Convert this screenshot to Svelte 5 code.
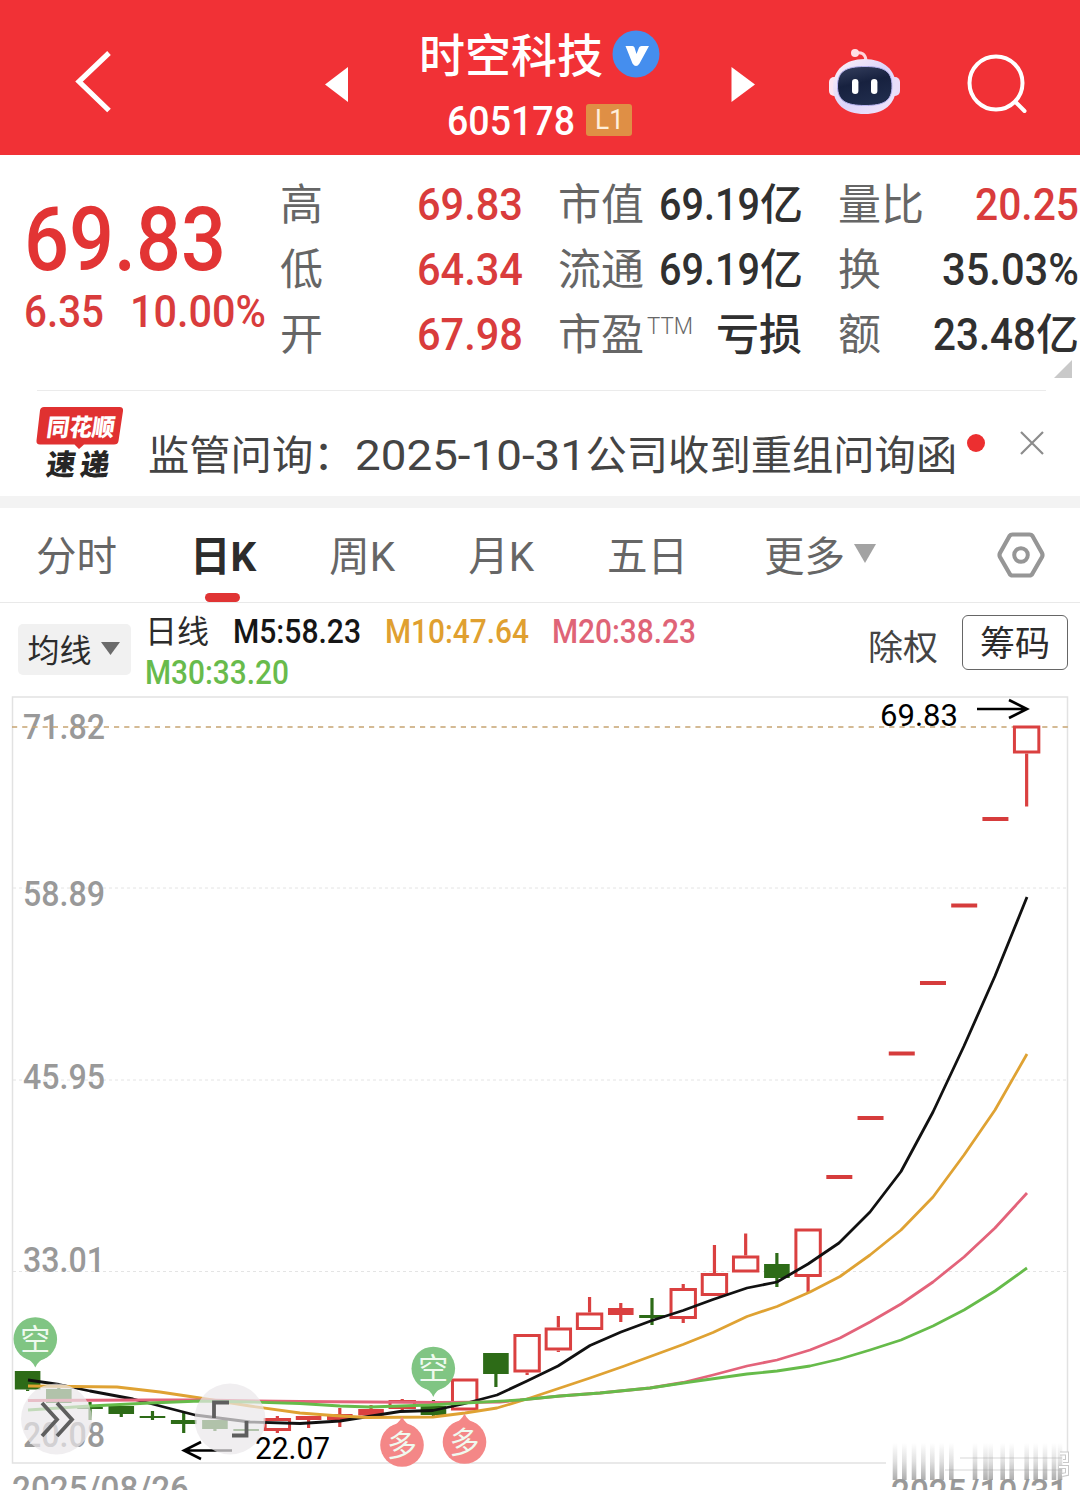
<script lang="ts">
    type Kind = "up" | "down" | "flat";

    interface Candle {
        kind: Kind;
        top: number;
        bottom: number;
        high?: number;
        low?: number;
        filled?: boolean;
    }

    const quotes = [
        [
            { label: "高", num: "69.83", w: 106, red: true },
            { label: "市值", num: "69.19", w: 101, unit: "亿" },
            { label: "量比", num: "20.25", w: 104, red: true },
        ],
        [
            { label: "低", num: "64.34", w: 106, red: true },
            { label: "流通", num: "69.19", w: 101, unit: "亿" },
            { label: "换", num: "35.03%", w: 137 },
        ],
        [
            { label: "开", num: "67.98", w: 106, red: true },
            { label: "市盈", sup: "TTM", unit: "亏损" },
            { label: "额", num: "23.48", w: 103, unit: "亿" },
        ],
    ];

    const tabs = ["分时", "日K", "周K", "月K", "五日"];
    let activeTab = $state("日K");

    const levels = [
        { text: "71.82", y: 739 },
        { text: "58.89", y: 906 },
        { text: "45.95", y: 1089 },
        { text: "33.01", y: 1272 },
        { text: "20.08", y: 1447 },
    ];

    // Candle geometry is in page pixels; the x position follows from the index.
    const FIRST_X = 27.6;
    const STEP = 31.22;
    const candles: Candle[] = [
        { kind: "down", top: 1371, bottom: 1389.5, low: 1391 },
        { kind: "down", top: 1389, bottom: 1403, high: 1388 },
        { kind: "down", top: 1407, bottom: 1409, high: 1402, low: 1420 },
        { kind: "down", top: 1406, bottom: 1414, low: 1417 },
        { kind: "down", top: 1416, bottom: 1418, high: 1411, low: 1420 },
        { kind: "down", top: 1420, bottom: 1424, high: 1413, low: 1433 },
        { kind: "down", top: 1420, bottom: 1429, low: 1431 },
        { kind: "down", top: 1429, bottom: 1431 },
        { kind: "up", top: 1418, bottom: 1431, high: 1416, low: 1433 },
        { kind: "up", top: 1416, bottom: 1420, low: 1428, filled: true },
        { kind: "up", top: 1414, bottom: 1420, high: 1408, low: 1427, filled: true },
        { kind: "up", top: 1409, bottom: 1415.5, high: 1405, filled: true },
        { kind: "up", top: 1400, bottom: 1409, high: 1399, low: 1411 },
        { kind: "down", top: 1406, bottom: 1415, high: 1400, low: 1416 },
        { kind: "up", top: 1378.5, bottom: 1410.5 },
        { kind: "down", top: 1353, bottom: 1374, low: 1387 },
        { kind: "up", top: 1334, bottom: 1372.5, low: 1375 },
        { kind: "up", top: 1327.5, bottom: 1350.5, high: 1316, low: 1352 },
        { kind: "up", top: 1312.5, bottom: 1330, high: 1297 },
        { kind: "up", top: 1308, bottom: 1315, high: 1303, low: 1322, filled: true },
        { kind: "down", top: 1315, bottom: 1318, high: 1298, low: 1325 },
        { kind: "up", top: 1288, bottom: 1319, high: 1284, low: 1323 },
        { kind: "up", top: 1273, bottom: 1296, high: 1245 },
        { kind: "up", top: 1255.5, bottom: 1272.5, high: 1233.5 },
        { kind: "down", top: 1264, bottom: 1278, high: 1253, low: 1287 },
        { kind: "up", top: 1228.5, bottom: 1277, low: 1292 },
        { kind: "flat", top: 1177, bottom: 1177 },
        { kind: "flat", top: 1118, bottom: 1118 },
        { kind: "flat", top: 1053.5, bottom: 1053.5 },
        { kind: "flat", top: 983, bottom: 983 },
        { kind: "flat", top: 905.5, bottom: 905.5 },
        { kind: "flat", top: 819, bottom: 819 },
        { kind: "up", top: 725.5, bottom: 753.5, low: 806.5 },
    ];

    const averages = [
        {
            color: "#111",
            points:
                "28,1380 59,1384.5 90,1391 133,1399 195,1415 250,1422 300,1423.5 340,1421 400,1411.5 433,1410.5 463,1404 497,1395 527,1381 558,1366 590,1345.5 621,1332 652,1320.5 683,1310.5 713,1299.5 747,1288 777,1282 808,1264 839,1243 870,1212 901,1171.5 933,1112 964,1046 995,976 1027,897",
        },
        {
            color: "#dfa233",
            points:
                "28,1386 117,1387 160,1392 200,1398 250,1406 300,1413 333,1415.5 367,1417.5 433,1417 465,1413 497,1408 527,1399 560,1388 590,1378 623,1366.5 653,1355.5 683,1344.5 713,1332.5 747,1316.5 777,1306.5 810,1292 840,1276.5 870,1255 901,1230 933,1197 964,1155 995,1110 1027,1054",
        },
        {
            color: "#e3637a",
            points:
                "28,1400.5 150,1400 200,1400 300,1401.5 440,1402.5 500,1402 560,1396 600,1393 650,1388 683,1382.5 713,1375 747,1366 777,1360 810,1350 840,1338 870,1322 901,1304 933,1282 964,1257 995,1228 1027,1193",
        },
        {
            color: "#66bb4a",
            points:
                "28,1410 90,1406 150,1403 200,1401 250,1402 300,1403.5 340,1406 370,1407 430,1405 465,1403 520,1400 560,1396 600,1393 650,1388 690,1382 747,1374 777,1371 810,1366 840,1359 870,1350 901,1340 933,1326 964,1310 995,1291 1027,1268",
        },
    ];

    const pins = [
        { text: "空", x: 35.3, y: 1339, dir: 1 },
        { text: "空", x: 433.3, y: 1368.5, dir: 1 },
        { text: "多", x: 402, y: 1445, dir: -1 },
        { text: "多", x: 464.5, y: 1442, dir: -1 },
    ];

    const streaks = [
        895, 904.3, 914, 923.3, 932.3, 941.7, 951.3, 975, 985.5, 990.7, 1002.7,
        1011.7, 1026.7, 1035.7, 1045, 1054, 1060,
    ];

    const capHeight = (size: number) => size * 0.711;
</script>

<!-- Condensed figures: the text is squeezed to a given width and stands on the baseline. -->
{#snippet fig(text: string, width: number, size: number, weight = 500)}
    <svg class="fig" {width} height={capHeight(size)}>
        <text
            y={capHeight(size)}
            font-size={size}
            font-weight={weight}
            textLength={width}
            lengthAdjust="spacingAndGlyphs">{text}</text
        >
    </svg>
{/snippet}

<div class="app">
    <header>
        <svg width="200" height="155" viewBox="0 0 200 155">
            <path d="M109 53 79 81.500 109 110.500" fill="none" stroke="#fff" stroke-width="5.200" />
        </svg>
        <svg width="200" height="155" viewBox="200 0 200 155">
            <path d="M325 84.500 348 67V102Z" fill="#fff" />
        </svg>
        <div class="title">
            <div class="name">
                <span>时空科技</span>
                <svg width="48" height="48" viewBox="0 0 48 48">
                    <circle cx="24" cy="24" r="23.500" fill="#458eee" />
                    <path
                        d="M13.500 16H20.500Q22 16 22.500 17.500L24.500 24 27 17.500Q27.700 16 29.500 16H37L27.500 33.500Q24 38.500 20.500 33.500Z"
                        fill="#fff"
                    />
                </svg>
            </div>
            <div class="code">
                {@render fig("605178", 128, 41.5)}
                <span class="level">{@render fig("L1", 29, 27, 400)}</span>
            </div>
        </div>
        <svg width="100" height="155" viewBox="700 0 100 155">
            <path d="M731.500 67 755 84.500 731.500 102Z" fill="#fff" />
        </svg>
        <svg width="130" height="155" viewBox="800 0 130 155">
            <defs>
                <linearGradient id="shell" x1="0" y1="0" x2="1" y2="1">
                    <stop offset="0" stop-color="#fff3f8" />
                    <stop offset="0.5" stop-color="#dcd5fa" />
                    <stop offset="1" stop-color="#f3e6fb" />
                </linearGradient>
                <linearGradient id="visor" x1="0" y1="0" x2="0.3" y2="1">
                    <stop offset="0" stop-color="#36405f" />
                    <stop offset="0.5" stop-color="#17213f" />
                    <stop offset="1" stop-color="#1f2b4b" />
                </linearGradient>
            </defs>
            <path d="M855 53Q865 51 866 60" fill="none" stroke="#ffd5dc" stroke-width="3" />
            <circle cx="855" cy="53" r="4" fill="#ffe1e7" />
            <rect x="829" y="77" width="12" height="19" rx="5" fill="#fbe6f2" />
            <rect x="888" y="77" width="12" height="19" rx="5" fill="#e9dcfa" />
            <path
                d="M864.500 59C884 59 896 70 896 87 896 104 884 114 864.500 114 845 114 833 104 833 87 833 70 845 59 864.500 59Z"
                fill="url(#shell)"
            />
            <path
                d="M865 66.500C884 66.500 892 71 892 86 892 101 884 105.500 865 105.500 846 105.500 837.500 101 837.500 86 837.500 71 846 66.500 865 66.500Z"
                fill="url(#visor)"
                stroke="#b9b5f1"
                stroke-width="1"
            />
            <rect x="852" y="79" width="6.400" height="15" rx="3.200" fill="#fff" />
            <rect x="871" y="79" width="6.400" height="15" rx="3.200" fill="#fff" />
        </svg>
        <svg width="150" height="155" viewBox="930 0 150 155">
            <g fill="none" stroke="#fff" stroke-width="4" stroke-linecap="round">
                <circle cx="996" cy="83" r="26.500" />
                <path d="M1015.500 102 1024.500 111" />
            </g>
        </svg>
    </header>

    <section class="quote">
        <div class="price">
            <div class="last">{@render fig("69.83", 202, 89)}</div>
            <div class="change">
                {@render fig("6.35", 80, 44)}
                {@render fig("10.00%", 136, 44)}
            </div>
        </div>
        <div class="grid">
            {#each quotes as row}
                {#each row as q}
                    <span class="label">
                        {q.label}{#if q.sup}<span class="sup">{@render fig(q.sup, 46, 24.5, 300)}</span>{/if}
                    </span>
                    <span class="value" class:red={q.red}>
                        {#if q.num}{@render fig(q.num, q.w, 44.5)}{/if}{q.unit ?? ""}
                    </span>
                {/each}
            {/each}
            <i class="corner"></i>
        </div>
    </section>

    <section class="news">
        <svg class="logo" width="88" height="74" viewBox="36 406 88 74">
            <path
                d="M44 407H119.500Q123.500 407 123 411L118.500 441Q118 444.500 114 444.500H84L79 449 74.500 444.500H40Q36 444.500 36.500 440.500L40 410.500Q40.500 407 44 407Z"
                fill="#e03131"
            />
            <g font-weight="900" transform="skewX(-8)">
                <text x="107" y="436" font-size="24" fill="#fff" textLength="68" lengthAdjust="spacingAndGlyphs">同花顺</text>
                <text x="112" y="475" font-size="29" fill="#262626">速</text>
                <text x="146" y="475" font-size="29" fill="#262626">递</text>
            </g>
        </svg>
        <p>监管问询：{@render fig("2025-10-31", 231, 42, 400)}公司收到重组问询函</p>
        <i class="dot"></i>
        <svg class="close" width="26" height="26" viewBox="0 0 26 26">
            <path d="M2 2 24 24M24 2 2 24" stroke="#8c8c8c" stroke-width="2.200" />
        </svg>
    </section>

    <nav>
        {#each tabs as tab}
            <button class:active={activeTab === tab} onclick={() => (activeTab = tab)}>{tab}</button>
        {/each}
        <button class="more">
            更多
            <svg width="22" height="19" viewBox="0 0 22 19">
                <path d="M0 0H22L11 19Z" fill="#a3a3a3" />
            </svg>
        </button>
        <svg class="gear" width="50" height="48" viewBox="0 0 50 48">
            <g fill="none" stroke="#969696">
                <path
                    d="M16.500 3.500H33.500Q35.500 3.500 36.500 5L46 22Q47 24 46 26L36.500 42.500Q35.500 44.500 33.500 44.500H16.500Q14.500 44.500 13.500 42.500L4 26Q3 24 4 22L13.500 5Q14.500 3.500 16.500 3.500Z"
                    stroke-width="4.200"
                />
                <circle cx="25" cy="24" r="6.800" stroke-width="4" />
            </g>
        </svg>
    </nav>

    <section class="legend">
        <button class="ma">
            均线
            <svg width="19" height="13" viewBox="0 0 19 13">
                <path d="M0 0H19L9.500 13Z" fill="#6b6b6b" />
            </svg>
        </button>
        <div class="values">
            <span class="period">日线</span>
            <span class="m5">{@render fig("M5:58.23", 128, 33.5)}</span>
            <span class="m10">{@render fig("M10:47.64", 144, 33.5)}</span>
            <span class="m20">{@render fig("M20:38.23", 144, 33.5)}</span>
            <span class="m30">{@render fig("M30:33.20", 144, 33.5)}</span>
        </div>
        <span class="adjust">除权</span>
        <button class="chips">筹码</button>
    </section>

    <svg class="chart" width="1080" height="800" viewBox="0 690 1080 800">
        <defs>
            <linearGradient id="fade" x1="0" y1="0" x2="0" y2="1">
                <stop offset="0" stop-color="#999" stop-opacity="0" />
                <stop offset="0.5" stop-color="#999" stop-opacity="0.3" />
                <stop offset="1" stop-color="#999" stop-opacity="0.8" />
            </linearGradient>
        </defs>

        <path d="M886 1463H12.500V697H1067.500V1452" fill="none" stroke="#e2e2e2" stroke-width="1.500" />
        {#each [888, 1080, 1271.5] as y}
            <line x1="13" x2="1067" y1={y} y2={y} stroke="#e4e4e4" stroke-dasharray="3 3" />
        {/each}

        {#each levels as l}
            <text class="axis" x="23" y={l.y} font-size="35" textLength="82" lengthAdjust="spacingAndGlyphs">{l.text}</text>
        {/each}
        <line x1="12" x2="1068" y1="727" y2="727" stroke="#c6a471" stroke-width="1.500" stroke-dasharray="5.200 5" />

        {#each candles as c, i}
            {@const x = FIRST_X + i * STEP}
            {#if c.kind === "flat"}
                <rect x={x - 13} y={c.top - 2} width="26" height="4" fill="#d63c3c" />
            {:else}
                {@const color = c.kind === "up" ? "#da4040" : "#2d6b17"}
                {#if c.high}
                    <line x1={x} x2={x} y1={c.high} y2={c.top} stroke={color} stroke-width="3.200" />
                {/if}
                {#if c.low}
                    <line x1={x} x2={x} y1={c.bottom} y2={c.low} stroke={color} stroke-width="3.200" />
                {/if}
                {#if c.kind === "up" && !c.filled}
                    <rect
                        x={x - 12.2}
                        y={c.top + 1.5}
                        width="24.400"
                        height={c.bottom - c.top - 3}
                        fill="#fff"
                        stroke={color}
                        stroke-width="3"
                    />
                {:else}
                    <rect x={x - 12.8} y={c.top} width="25.600" height={c.bottom - c.top} fill={color} />
                {/if}
            {/if}
        {/each}

        {#each averages as line}
            <polyline points={line.points} fill="none" stroke={line.color} stroke-width="2.800" stroke-linejoin="round" />
        {/each}

        <g class="mark">
            <text x="880" y="726" font-size="31.500" textLength="78" lengthAdjust="spacingAndGlyphs">69.83</text>
            <path d="M977 709H1027M1009 700 1027 709 1009 718" />
            <text x="255" y="1459" font-size="31.500" textLength="75" lengthAdjust="spacingAndGlyphs">22.07</text>
            <path d="M232 1450.500H184M201 1442 184 1450.500 201 1459" />
        </g>

        {#each pins as p}
            <g transform="translate({p.x} {p.y})">
                <g fill={p.dir > 0 ? "#80c583" : "#f48787"}>
                    <circle r="21.800" />
                    <path d="M-12 {18 * p.dir}Q-3 {21 * p.dir} 0 {28.5 * p.dir}Q3 {21 * p.dir} 12 {18 * p.dir}Z" />
                </g>
                <text class="pin" y="10.500" text-anchor="middle">{p.text}</text>
            </g>
        {/each}

        <g fill="#e9e7e9" fill-opacity="0.7">
            <circle cx="56.500" cy="1419" r="35.500" />
            <circle cx="230" cy="1419" r="35.500" />
        </g>
        <g fill="none" stroke="#5e5e5e" stroke-width="3.800">
            <path d="M42 1403 57 1419.500 42 1436" />
            <path d="M57 1403 72 1419.500 57 1436" />
            <path d="M229 1402.500H214V1418M246.500 1421V1435.500H232" />
        </g>

        <text class="axis" x="12" y="1501" font-size="35" textLength="177" lengthAdjust="spacingAndGlyphs">2025/08/26</text>
        <text class="axis" x="891" y="1504" font-size="35" textLength="177" lengthAdjust="spacingAndGlyphs">2025/10/31</text>
        {#each streaks as x}
            <rect x={x - 2.3} y="1443" width="4.600" height="37" fill="url(#fade)" />
        {/each}
        <path d="M960 1458H1062M945 1470H1062" stroke="#999" stroke-opacity="0.2" stroke-width="2" />
        <path
            d="M1060 1453.500H1067V1461H1063M1059 1467H1067V1474L1062 1475"
            fill="none"
            stroke="#c9c9c9"
            stroke-width="4"
        />
        <path
            d="M1060 1453.500H1067V1461H1063M1059 1467H1067V1474L1062 1475"
            fill="none"
            stroke="#fff"
            stroke-width="2"
        />
    </svg>
</div>

<style>
    :global(body) {
        background: #fff;
    }

    .app {
        width: 1080px;
        height: 1490px;
        overflow: hidden;
        background: #fff;
        color: #303030;
        font-family: Roboto, "Noto Sans CJK SC", sans-serif;
    }

    svg {
        display: block;
        flex: none;
    }
    .fig {
        display: inline-block;
        overflow: visible;
        fill: currentColor;
        vertical-align: baseline;
    }

    button {
        padding: 0;
        border: 0;
        background: none;
        color: inherit;
        font: inherit;
    }

    header {
        display: flex;
        height: 155px;
        background: #f13136;
        color: #fff;
    }
    .title {
        width: 300px;
    }
    .name {
        display: flex;
        align-items: center;
        gap: 9px;
        height: 60px;
        padding: 26px 0 0 19px;
        font-size: 46px;
        font-weight: 500;
        line-height: 60px;
    }
    .name svg {
        margin-top: -5px;
    }
    .code {
        display: flex;
        align-items: center;
        gap: 11px;
        height: 34px;
        margin-top: 17px;
        padding-left: 47px;
    }
    .level {
        display: flex;
        align-items: center;
        justify-content: center;
        width: 46px;
        height: 32px;
        border-radius: 3px;
        background: #df8f45;
        color: #ffeeda;
    }

    .quote {
        display: flex;
        height: 235px;
    }
    .price {
        width: 256px;
        padding: 52px 0 0 24px;
        color: #e23434;
    }
    .last,
    .change {
        display: flex;
    }
    .change {
        gap: 26px;
        margin-top: 26px;
        color: #d93c3c;
    }

    .grid {
        position: relative;
        display: grid;
        grid-template-columns: 90px 153px 136px 143px 124px 153px;
        grid-auto-rows: 65px;
        width: 800px;
        padding-top: 18px;
        font-size: 43px;
        line-height: 65px;
        white-space: nowrap;
    }
    .label {
        color: #666;
    }
    .label:nth-of-type(6n + 3) {
        padding-left: 35px;
    }
    .label:nth-of-type(6n + 5) {
        padding-left: 36px;
    }
    .value {
        font-weight: 500;
        text-align: right;
    }
    .value.red {
        color: #d93c3c;
    }
    .sup {
        position: relative;
        top: -16px;
        left: 3px;
    }
    .corner {
        position: absolute;
        right: 8px;
        bottom: 12px;
        border-bottom: 18px solid #c9c9c9;
        border-left: 18px solid transparent;
    }

    .news {
        display: flex;
        height: 105px;
        margin: 0 34px 0 37px;
        border-top: 1px solid #ebebeb;
        color: #444;
    }
    .logo {
        overflow: visible;
        margin: 15px 0 0 -1px;
        font-family: "Noto Sans CJK SC", sans-serif;
    }
    .news p {
        flex: none;
        margin: 34px 0 0 24px;
        font-size: 41.3px;
        line-height: 62px;
        white-space: nowrap;
    }
    .dot {
        flex: none;
        width: 18px;
        height: 18px;
        margin: 43px 0 0 10px;
        border-radius: 50%;
        background: #ec2f30;
    }
    .close {
        margin: 39px 0 0 34px;
    }

    nav {
        display: flex;
        align-items: flex-start;
        height: 94px;
        padding-left: 36px;
        border-top: 12px solid #f3f3f3;
        border-bottom: 1px solid #e9e9e9;
        color: #666;
        font-size: 40.5px;
    }
    nav button {
        position: relative;
        height: 94px;
        margin-right: 73px;
        padding-bottom: 4px;
    }
    nav button.active {
        color: #2c2c2c;
        font-weight: 700;
    }
    nav button.active::after {
        content: "";
        position: absolute;
        bottom: 0;
        left: 15px;
        width: 35px;
        height: 9px;
        border-radius: 5px;
        background: #e03434;
    }
    nav .more {
        display: flex;
        align-items: center;
        gap: 9px;
        margin: 0 0 0 3px;
    }
    .gear {
        margin: 23px 34px 0 auto;
    }

    .legend {
        display: flex;
        height: 87px;
        padding-left: 18px;
    }
    .ma {
        display: flex;
        align-items: center;
        justify-content: center;
        gap: 9px;
        width: 113px;
        height: 51px;
        margin-top: 21px;
        padding: 0 2px 4px 0;
        border-radius: 5px;
        background: #f1f1f1;
        color: #2c2c2c;
        font-size: 32px;
    }
    .ma svg {
        margin-top: 2px;
    }
    .values {
        display: flex;
        flex-wrap: wrap;
        align-content: flex-start;
        width: 620px;
        margin-left: 14px;
        padding-top: 9px;
        font-size: 32px;
        line-height: 41px;
    }
    .values span {
        height: 41px;
    }
    .period {
        width: 88px;
        color: #2c2c2c;
    }
    .m5 {
        width: 152px;
        color: #161616;
    }
    .m10 {
        width: 167px;
        color: #e0a030;
    }
    .m20 {
        width: 150px;
        color: #df6477;
    }
    .m30 {
        color: #68bb4c;
    }
    .adjust {
        margin: 21px 0 0 auto;
        color: #444;
        font-size: 35px;
        line-height: 50px;
    }
    .chips {
        width: 106px;
        height: 55px;
        margin: 12px 12px 0 24px;
        padding-top: 5px;
        border: 1.5px solid #666;
        border-radius: 6px;
        color: #2c2c2c;
        font-size: 35px;
        line-height: 48px;
    }

    .axis {
        fill: #999;
        font-weight: 500;
    }
    .mark {
        fill: #000;
    }
    .mark path {
        fill: none;
        stroke: #000;
        stroke-width: 2.6px;
    }
    .pin {
        fill: #effaef;
        font-size: 30px;
    }
</style>
